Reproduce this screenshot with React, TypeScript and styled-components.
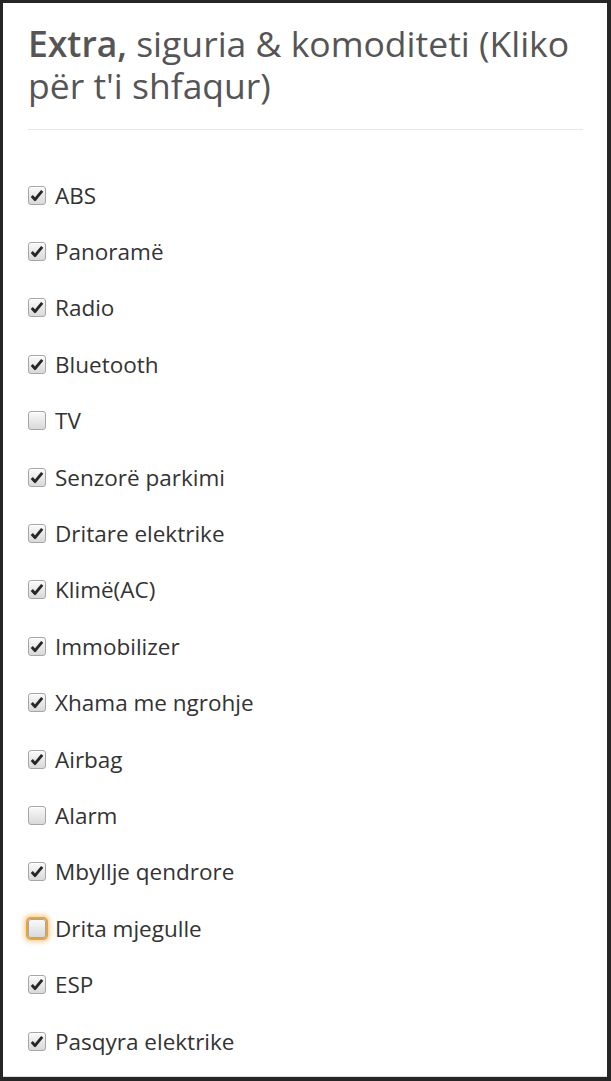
import styled, { createGlobalStyle } from 'styled-components'

const GlobalStyle = createGlobalStyle`
  html, body {
    margin: 0;
    padding: 0;
    background: #fff;
  }
  body {
    font-family: "Open Sans", "Noto Sans", sans-serif;
  }
`

const Frame = styled.div`
  box-sizing: border-box;
  height: 1081px;
  border-style: solid;
  border-color: #262626;
  border-width: 3px 4px 4px 3px;
  padding: 19px 24px 0 25px;
  background: #fff;
  box-shadow: inset 0 -1px 0 #dcdcdc;
`

const Title = styled.h2`
  margin: 0;
  font-size: 35.5px;
  line-height: 42px;
  font-weight: 400;
  color: #555;

  strong {
    font-weight: 600;
  }
`

const Divider = styled.hr`
  margin: 23px 0 0;
  border: 0;
  border-top: 1px solid #e8e8e8;
`

const List = styled.ul`
  list-style: none;
  margin: 37px 0 0;
  padding: 0;
`

const Row = styled.li`
  display: flex;
  align-items: center;
  height: 56.4px;
  font-size: 22.5px;
  color: #333;
`

const Box = styled.span<{ $focused?: boolean }>`
  box-sizing: border-box;
  width: 18px;
  height: 19px;
  margin-right: 9px;
  flex-shrink: 0;
  border: 1px solid #a6a6a6;
  border-radius: 3px;
  background: linear-gradient(#fafafa, #d9d9d9);
  display: flex;
  align-items: center;
  justify-content: center;
  box-shadow: ${(p) =>
    p.$focused
      ? '0 0 0 2px rgba(224, 146, 28, 0.75), 0 0 5px 4px rgba(236, 168, 60, 0.55)'
      : 'inset 0 1px 0 #fff'};
`

const items: { label: string; checked: boolean; focused?: boolean }[] = [
  { label: 'ABS', checked: true },
  { label: 'Panoramë', checked: true },
  { label: 'Radio', checked: true },
  { label: 'Bluetooth', checked: true },
  { label: 'TV', checked: false },
  { label: 'Senzorë parkimi', checked: true },
  { label: 'Dritare elektrike', checked: true },
  { label: 'Klimë(AC)', checked: true },
  { label: 'Immobilizer', checked: true },
  { label: 'Xhama me ngrohje', checked: true },
  { label: 'Airbag', checked: true },
  { label: 'Alarm', checked: false },
  { label: 'Mbyllje qendrore', checked: true },
  { label: 'Drita mjegulle', checked: false, focused: true },
  { label: 'ESP', checked: true },
  { label: 'Pasqyra elektrike', checked: true },
]

function Check() {
  return (
    <svg width="14" height="13" viewBox="0 0 14 13">
      <path d="M1.8 7 L5 10.6 L12.2 1.8" fill="none" stroke="#262626" strokeWidth="2.9" strokeLinejoin="round" />
    </svg>
  )
}

export default function App() {
  return (
    <>
      <GlobalStyle />
      <Frame>
        <Title>
          <strong>Extra,</strong> siguria &amp; komoditeti (Kliko për t'i shfaqur)
        </Title>
        <Divider />
        <List>
          {items.map((it) => (
            <Row key={it.label}>
              <Box $focused={it.focused}>{it.checked && <Check />}</Box>
              {it.label}
            </Row>
          ))}
        </List>
      </Frame>
    </>
  )
}
